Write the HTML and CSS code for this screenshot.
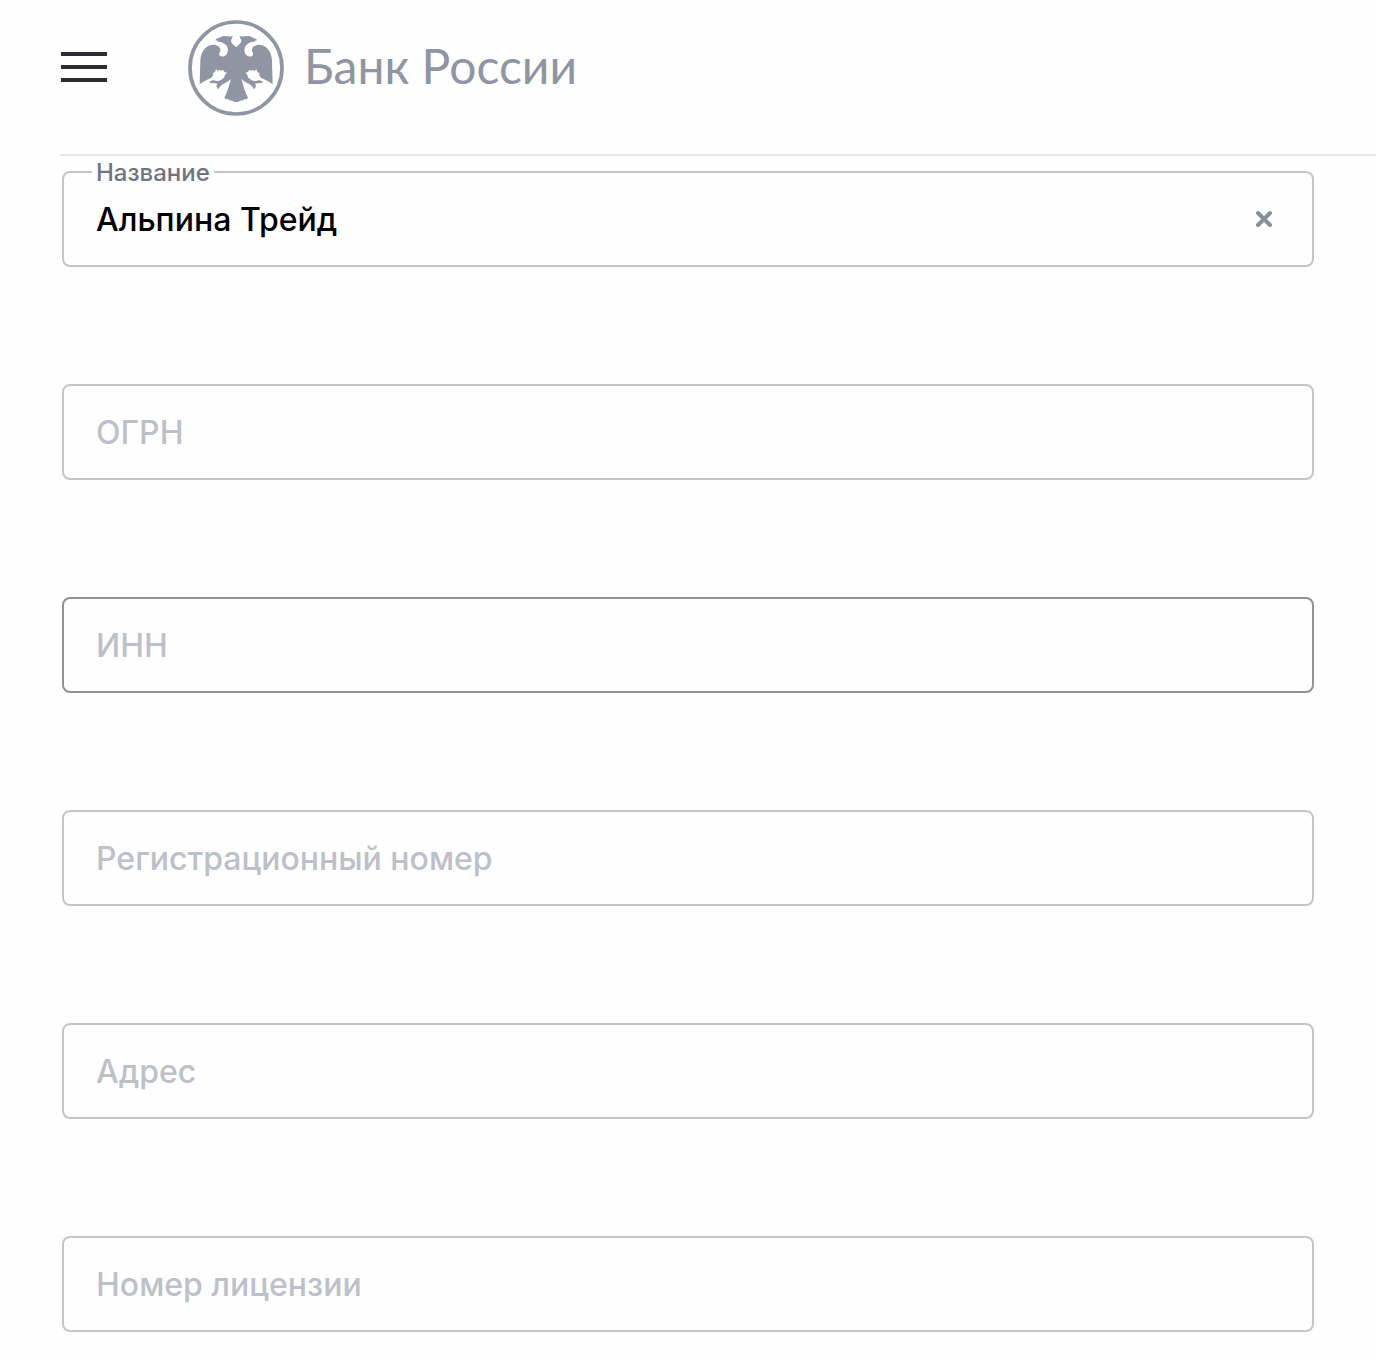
FILE: index.html
```html
<!DOCTYPE html>
<html lang="ru">
<head>
  <meta charset="UTF-8">
  <meta name="viewport" content="width=device-width, initial-scale=1">
  <title>Банк России</title>
  <link rel="stylesheet" href="styles.css">
</head>
<body>

  <header class="header">
    <button class="menu-btn" type="button" aria-label="Меню">
      <span></span>
      <span></span>
      <span></span>
    </button>
    <a class="logo" href="#">
      <svg class="logo-icon" viewBox="24 24 288 288" aria-hidden="true">
        <defs>
          <!-- half of the eagle, mirrored for the other side -->
          <g id="wing">
            <path d="M169 106 C162 99 154 94 153 87 C153 81 158 77 158 71 C151 76 145 73 134 72 C124 72 120 78 108 81 L107 85 L113 86 L112 90 C120 88 127 91 133 95 C143 101 146 112 142 123 C138 134 125 137 118 129 C115 123 123 121 121 111 C118 101 103 95 90 100 C72 107 62 124 61 146 L59 217 C70 207 82 204 93 198 C100 193 100 186 99 182 C104 182 107 178 108 171 C112 177 115 178 118 173 C123 177 126 176 129 173 C131 179 136 181 142 182 C136 185 137 188 133 191 C136 195 131 198 127 201 C121 206 114 208 108 207 C101 203 94 206 89 209 L91 214 C98 211 105 214 112 215 C107 221 110 227 115 232 C118 225 123 220 128 217 C136 213 145 208 153 201 C148 220 141 241 133 257 C137 264 143 260 145 262 C149 269 155 265 157 266 C160 269 165 270 169 270 Z"/>
          </g>
        </defs>
        <circle cx="168" cy="168" r="138" fill="none" stroke="#9095a3" stroke-width="11"/>
        <g fill="#9095a3">
          <use href="#wing"/>
          <use href="#wing" transform="matrix(-1 0 0 1 337 0)"/>
        </g>
      </svg>
      <span class="logo-text">Банк России</span>
    </a>
  </header>

  <form class="filters">
    <div class="field filled">
      <label for="name">Название</label>
      <input type="text" id="name" value="Альпина Трейд">
      <button class="clear-btn" type="button" aria-label="Очистить">
        <svg viewBox="0 0 18 18" aria-hidden="true"><path d="M3 3L15 15M15 3L3 15"/></svg>
      </button>
    </div>
    <div class="field">
      <input type="text" id="ogrn" aria-label="ОГРН" placeholder="ОГРН">
    </div>
    <div class="field active">
      <input type="text" id="inn" aria-label="ИНН" placeholder="ИНН">
    </div>
    <div class="field">
      <input type="text" id="regnum" aria-label="Регистрационный номер" placeholder="Регистрационный номер">
    </div>
    <div class="field">
      <input type="text" id="address" aria-label="Адрес" placeholder="Адрес">
    </div>
    <div class="field">
      <input type="text" id="license" aria-label="Номер лицензии" placeholder="Номер лицензии">
    </div>
  </form>

</body>
</html>
```
FILE: styles.css
```css
* {
  box-sizing: border-box;
}

body {
  margin: 0;
  background-color: #fefefe;
  font-family: Inter, "Liberation Sans", sans-serif;
}

.header {
  display: flex;
  align-items: center;
  gap: 80px;
  margin-left: 60px;
  padding: 20px 0 38px;
  border-bottom: 2px solid #e6e6e6;
}

.menu-btn {
  display: flex;
  flex-direction: column;
  gap: 9px;
  width: 48px;
  padding: 0 1px 2px;
  border: 0;
  background: none;
}

.menu-btn span {
  height: 4px;
  background-color: #2b2b2f;
}

.logo {
  display: flex;
  align-items: center;
  gap: 20px;
  color: #9095a3;
  text-decoration: none;
}

.logo-icon {
  width: 96px;
  height: 96px;
}

.logo-text {
  padding-bottom: 4px;
  font-family: Lato, sans-serif;
  font-size: 48px;
  line-height: 56px;
}

.filters {
  display: flex;
  flex-direction: column;
  gap: 117px;
  padding: 15px 62px 27px;
}

.field {
  position: relative;
  display: flex;
  align-items: center;
  height: 96px;
  border: 2px solid #c4c5c8;
  border-radius: 8px;
}

.field.active {
  border-color: #8e9198;
}

/* label sits over the top border */
.field label {
  position: absolute;
  top: -14px;
  left: 28px;
  padding: 0 4px;
  background-color: #fefefe;
  color: #6f7482;
  font-size: 24px;
  font-weight: 500;
  line-height: 28px;
}

.field input {
  flex: 1;
  min-width: 0;
  height: 100%;
  padding: 0 32px;
  border: 0;
  outline: none;
  background: none;
  color: #000;
  font-family: inherit;
  font-size: 32px;
  font-weight: 500;
}

.field input::placeholder {
  color: #bdc0ca;
  opacity: 1;
}

.clear-btn {
  display: flex;
  margin-right: 31px;
  padding: 8px;
  border: 0;
  background: none;
}

.clear-btn svg {
  width: 18px;
  height: 18px;
  fill: none;
  stroke: #8a8f9d;
  stroke-width: 4;
  stroke-linecap: round;
}
```
